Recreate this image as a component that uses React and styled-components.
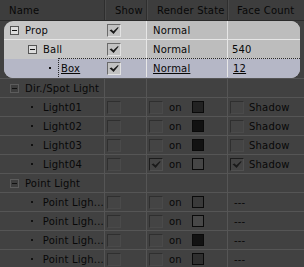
import React from "react";
import styled, { createGlobalStyle, css } from "styled-components";

const GlobalStyle = createGlobalStyle`
  html, body {
    margin: 0;
    padding: 0;
    background: #414141;
  }
  body {
    font-family: "DejaVu Sans", "Liberation Sans", sans-serif;
    font-size: 10px;
    letter-spacing: 0.2px;
    color: #080808;
  }
`;

const Panel = styled.div`
  width: 304px;
  height: 267px;
  overflow: hidden;
  background: #414141;
`;

const Header = styled.div`
  display: grid;
  grid-template-columns: 105px 42px 81px 1fr;
  height: 20px;
  background: #3d3d3d;
  border-bottom: 1px solid #2b2b2b;
`;

const HeadCell = styled.div`
  display: flex;
  align-items: center;
  padding-left: ${(p) => p.$pad}px;
  border-right: 1px solid ${(p) => (p.$last ? "transparent" : "#2e2e2e")};
  box-shadow: ${(p) => (p.$first ? "none" : "inset 1px 0 0 #4a4a4a")};
  white-space: nowrap;
`;

const GroupWrap = styled.div`
  padding: 0 4px;
  border-bottom: 1px solid #555555;
`;

const Group = styled.div`
  border-radius: 9px;
  overflow: hidden;
  background: #c6c6c6;
`;

const Row = styled.div`
  position: relative;
  display: grid;
  grid-template-columns: ${(p) =>
    p.$light ? "101px 42px 81px 1fr" : "105px 42px 81px 1fr"};
  height: 18px;
  border-bottom: 1px solid ${(p) => (p.$line ? p.$line : "#555555")};
  ${(p) =>
    p.$focus &&
    css`
      background: #b5b7c6;
      &::before {
        content: "";
        position: absolute;
        left: 54px;
        top: -1px;
        right: 0;
        bottom: 0;
        border-top: 1px dotted #2a2a2a;
        border-left: 1px dotted #2a2a2a;
        pointer-events: none;
      }
    `}
`;

const Cell = styled.div`
  display: flex;
  align-items: center;
  padding-left: ${(p) => p.$pad || 0}px;
  border-right: 1px solid
    ${(p) => (p.$noline ? "transparent" : p.$lineColor || "#555555")};
  background: ${(p) => p.$bg || "transparent"};
  white-space: nowrap;
  overflow: hidden;
`;

const Label = styled.span`
  margin-left: ${(p) => p.$ml || 0}px;
  text-decoration: ${(p) => (p.$u ? "underline" : "none")};
  text-underline-offset: 1px;
`;

const Expander = styled.span`
  display: inline-flex;
  align-items: center;
  justify-content: center;
  box-sizing: border-box;
  width: 9px;
  height: 9px;
  margin-right: 6px;
  border: 1px solid ${(p) => (p.$light ? "#555" : "#5c5c5c")};
  background: ${(p) => (p.$light ? "#dcdcdc" : "#3e3e3e")};
  &::after {
    content: "";
    width: 5px;
    height: 1px;
    background: #111;
  }
`;

const Bullet = styled.span`
  width: 2px;
  height: 2px;
  background: #111;
  margin-right: 10px;
`;

const Box = styled.span`
  display: inline-flex;
  align-items: center;
  justify-content: center;
  box-sizing: border-box;
  width: 14px;
  height: 13px;
  flex-shrink: 0;
  border: 1px solid;
  ${(p) =>
    p.$light
      ? css`
          border-color: #6a6a6a #e2e2e2 #e2e2e2 #6a6a6a;
          background: #c2c2c2;
        `
      : css`
          border-color: ${p.$on
            ? "#1c1c1c #505050 #505050 #1c1c1c"
            : "#2f2f2f #4a4a4a #4a4a4a #2f2f2f"};
          background: #444444;
        `}
`;

const Swatch = styled.span`
  width: 12px;
  height: 12px;
  box-sizing: border-box;
  border: 1px solid #0a0a0a;
  background: ${(p) => p.$color};
  margin-left: 10px;
`;

const Check = ({ on, light }) => (
  <Box $light={light} $on={on}>
    {on && (
      <svg width="10" height="9" viewBox="0 0 10 9">
        <path d="M0.5 4.2 L2.6 3.4 L4.3 5.3 L9 1 L9.6 1.8 L4.6 8 Z" fill="#1a1a1a" />
      </svg>
    )}
  </Box>
);

const lights = [
  { name: "Light01", swatch: "#222222" },
  { name: "Light02", swatch: "#111111" },
  { name: "Light03", swatch: "#121212" },
  { name: "Light04", swatch: "#464646", on: true },
];

const points = ["#3a3a3a", "#484848", "#121212", "#2f2f2f"];

const DarkRow = ({ level, name, children, render, face }) => (
  <Row>
    <Cell $pad={level === 0 ? 10 : 31}>
      {level === 0 ? <Expander /> : <Bullet />}
      <Label>{name}</Label>
    </Cell>
    <Cell $pad={2}>{children}</Cell>
    <Cell $pad={2}>{render}</Cell>
    <Cell $pad={2} $noline>
      {face}
    </Cell>
  </Row>
);

export default function App() {
  return (
    <>
      <GlobalStyle />
      <Panel>
        <Header>
          <HeadCell $pad={9} $first>Name</HeadCell>
          <HeadCell $pad={10}>Show</HeadCell>
          <HeadCell $pad={10}>Render State</HeadCell>
          <HeadCell $pad={9} $last>Face Count</HeadCell>
        </Header>

        <GroupWrap>
          <Group>
            <Row $light $line="#e6e6e6">
              <Cell $pad={6} $noline>
                <Expander $light />
                <Label>Prop</Label>
              </Cell>
              <Cell $pad={2} $lineColor="#e6e6e6">
                <Check light on />
              </Cell>
              <Cell $pad={6} $lineColor="#e6e6e6" $bg="#bdbdbd">Normal</Cell>
              <Cell $pad={4} $noline $bg="#bdbdbd" />
            </Row>
            <Row $light $line="transparent">
              <Cell $pad={24} $noline>
                <Expander $light />
                <Label>Ball</Label>
              </Cell>
              <Cell $pad={2} $lineColor="#e6e6e6">
                <Check light on />
              </Cell>
              <Cell $pad={6} $lineColor="#e6e6e6" $bg="#bdbdbd">Normal</Cell>
              <Cell $pad={4} $noline $bg="#bdbdbd">540</Cell>
            </Row>
            <Row $light $focus $line="transparent">
              <Cell $pad={45} $noline>
                <Bullet />
                <Label $u>Box</Label>
              </Cell>
              <Cell $pad={2} $lineColor="#e6e6e6">
                <Check light on />
              </Cell>
              <Cell $pad={6} $lineColor="#e6e6e6">
                <Label $u>Normal</Label>
              </Cell>
              <Cell $pad={5} $noline>
                <Label $u>12</Label>
              </Cell>
            </Row>
          </Group>
        </GroupWrap>

        <DarkRow level={0} name="Dir./Spot Light" />
        {lights.map((l) => (
          <DarkRow
            key={l.name}
            level={1}
            name={l.name}
            render={
              <>
                <Check on={l.on} />
                <Label $ml={6}>on</Label>
                <Swatch $color={l.swatch} />
              </>
            }
            face={
              <>
                <Check on={l.on} />
                <Label $ml={5}>Shadow</Label>
              </>
            }
          >
            <Check on={false} />
          </DarkRow>
        ))}

        <DarkRow level={0} name="Point Light" />
        {points.map((c, i) => (
          <DarkRow
            key={i}
            level={1}
            name="Point Ligh..."
            render={
              <>
                <Check />
                <Label $ml={6}>on</Label>
                <Swatch $color={c} />
              </>
            }
            face={<Label $ml={4}>---</Label>}
          >
            <Check />
          </DarkRow>
        ))}
      </Panel>
    </>
  );
}
